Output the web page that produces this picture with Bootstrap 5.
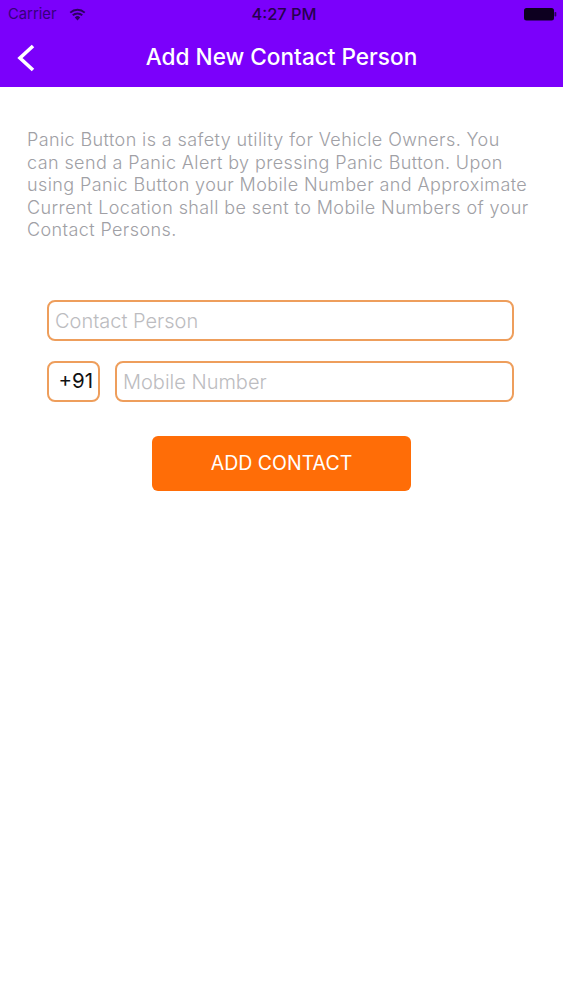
<!doctype html>
<html lang="en"><head><meta charset="utf-8">
<link href="https://cdn.jsdelivr.net/npm/bootstrap@5.3.0/dist/css/bootstrap.min.css" rel="stylesheet">
<style>
body{font-family:Inter,"Liberation Sans",sans-serif;background:#fff}
.app-head{background:#7b00fb;height:87px}
.status-row{height:29px;padding:0 6px 0 8px;color:#2f0068;font-size:15px}
.status-row>div{flex:1 1 0}
.status-time{font-weight:500;font-size:16.4px;color:#26004f;padding-left:3px}
.carrier{font-size:14.8px;font-weight:400;color:#36007a}
.wifi-gap{gap:12px}
.title-row{height:58px;padding:0 16px}
.title-text{color:#fff;font-size:22.6px;font-weight:500;line-height:1;padding-bottom:1px}
.title-side{width:22px}
.intro{margin:42px 31px 0 27px;color:#a0a0a5;font-size:18px;letter-spacing:.4px;line-height:22.6px;font-weight:300}
.form-area{margin:58px 49px 0 47px;gap:20px}
.field{height:41px;border:2px solid #ee9e5c;border-radius:8px;font-size:20px;padding:2px 6px 0;font-weight:300;color:#000;background:#fff;box-shadow:none}
.field::placeholder{color:#bcbcc0;opacity:1}
.code-box{width:53px;flex:none;display:flex;align-items:center;justify-content:flex-end;padding:0 5px 0 0;font-weight:400;font-size:20.5px;color:#111}
.phone-row{gap:15px}
.add-btn{display:block;margin:34px auto 0;width:259px;height:55px;background:#ff6d07;border:0;border-radius:6px;color:#fff;font-size:19.5px;font-weight:400;padding:0}
.add-btn:hover{background:#ff6d07;color:#fff}
</style></head><body class="m-0">
<header class="app-head">
<div class="status-row d-flex align-items-center">
<div class="d-flex align-items-center wifi-gap"><span class="carrier">Carrier</span>
<svg width="17" height="13" viewBox="0 0 17 13"><path d="M8.500 12.500 5.800 9.400a3.800 3.800 0 0 1 5.400 0zM4.400 8A6 6 0 0 1 12.600 8l1.300-1.400a8 8 0 0 0-10.800 0zM1.900 5.300a9.800 9.800 0 0 1 13.200 0l1.300-1.400a11.800 11.800 0 0 0-15.800 0z" fill="#2c005f"/></svg></div>
<div class="status-time text-center">4:27 PM</div>
<div class="d-flex justify-content-end"><svg width="33" height="13" viewBox="0 0 33 13"><rect x="0" y="0" width="30" height="12.500" rx="2.500" fill="#0d0020"/><rect x="30.500" y="4" width="1.800" height="4.500" rx=".8" fill="#2c005f"/></svg></div>
</div>
<div class="title-row d-flex align-items-center justify-content-between">
<svg class="title-side" width="22" height="30" viewBox="0 0 22 30"><path d="M17 3 4 15l13 12" fill="none" stroke="#fff" stroke-width="3.600"/></svg>
<span class="title-text">Add New Contact Person</span>
<span class="title-side"></span>
</div>
</header>
<main>
<p class="intro mb-0">Panic Button is a safety utility for Vehicle Owners. You can send a Panic Alert by pressing Panic Button. Upon using Panic Button your Mobile Number and Approximate Current Location shall be sent to Mobile Numbers of your Contact Persons.</p>
<form class="form-area d-flex flex-column">
<input class="form-control field" type="text" placeholder="Contact Person" aria-label="Contact Person">
<div class="phone-row d-flex">
<div class="field code-box">+91</div>
<input class="form-control field flex-grow-1 w-auto" type="text" placeholder="Mobile Number" aria-label="Mobile Number">
</div>
</form>
<button type="button" class="btn add-btn">ADD CONTACT</button>
</main>
<script src="https://cdn.jsdelivr.net/npm/bootstrap@5.3.0/dist/js/bootstrap.bundle.min.js"></script>
</body></html>
